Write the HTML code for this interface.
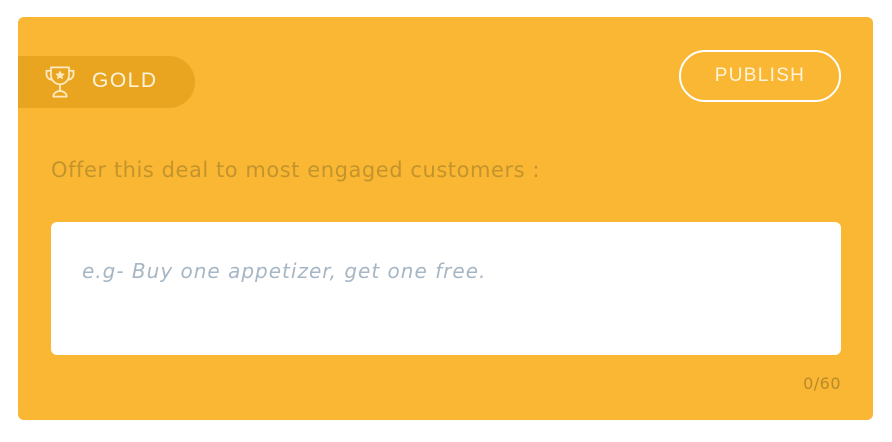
<!DOCTYPE html>
<html><head><style>
html,body{margin:0;padding:0;background:#fff;width:892px;height:442px;overflow:hidden;font-family:"Liberation Sans",sans-serif}
.card{position:absolute;left:18px;top:17px;width:855px;height:403px;background:#F9B733;border-radius:6px}
.badge{position:absolute;left:0;top:39px;width:177px;height:52px;background:#E9A520;border-radius:0 26px 26px 0}
.badge svg{position:absolute;left:24px;top:8px}
.badge span{position:absolute;left:74px;top:13px;color:#FFF3DC;font-size:21px;letter-spacing:1.5px}
.pub{position:absolute;left:661px;top:33px;width:158px;height:48px;border:2.5px solid #fff;border-radius:27px;color:#FFF3DC;font-size:19px;letter-spacing:1.3px;text-align:center;line-height:48px}
.lbl{position:absolute;left:33px;top:141px;color:#C4942C;font-size:21px;font-family:"DejaVu Sans",sans-serif;letter-spacing:0.55px;white-space:nowrap}
.inp{position:absolute;left:33px;top:205px;width:790px;height:133px;background:#fff;border-radius:6px}
.inp span{position:absolute;left:31px;top:37px;color:#A7B6C4;font-size:20px;font-style:italic;font-family:"DejaVu Sans",sans-serif;letter-spacing:1px;white-space:nowrap}
.cnt{position:absolute;right:32px;top:357px;color:#B98A2A;font-size:16px;font-family:"DejaVu Sans",sans-serif;letter-spacing:0.5px}
</style></head><body>
<div class="card">
<div class="badge"><svg width="36" height="36" viewBox="0 0 32 32" fill="none" stroke="#FFE9BF" stroke-width="1.6" stroke-linejoin="round"><path d="M8 3h16v7a8 8 0 0 1-16 0z"/><path d="M8 6H4v3a5 5 0 0 0 5 5M24 6h4v3a5 5 0 0 1-5 5"/><path d="M16 18v6M10 29c0-3 3-5 6-5s6 2 6 5z"/><path d="M16 6.5l1.1 2.2 2.4.3-1.8 1.6.5 2.4-2.2-1.2-2.2 1.2.5-2.4-1.8-1.6 2.4-.3z" fill="#FFE9BF" stroke-width="0.8"/></svg><span>GOLD</span></div>
<div class="pub">PUBLISH</div>
<div class="lbl">Offer this deal to most engaged customers :</div>
<div class="inp"><span>e.g- Buy one appetizer, get one free.</span></div>
<div class="cnt">0/60</div>
</div>
</body></html>
